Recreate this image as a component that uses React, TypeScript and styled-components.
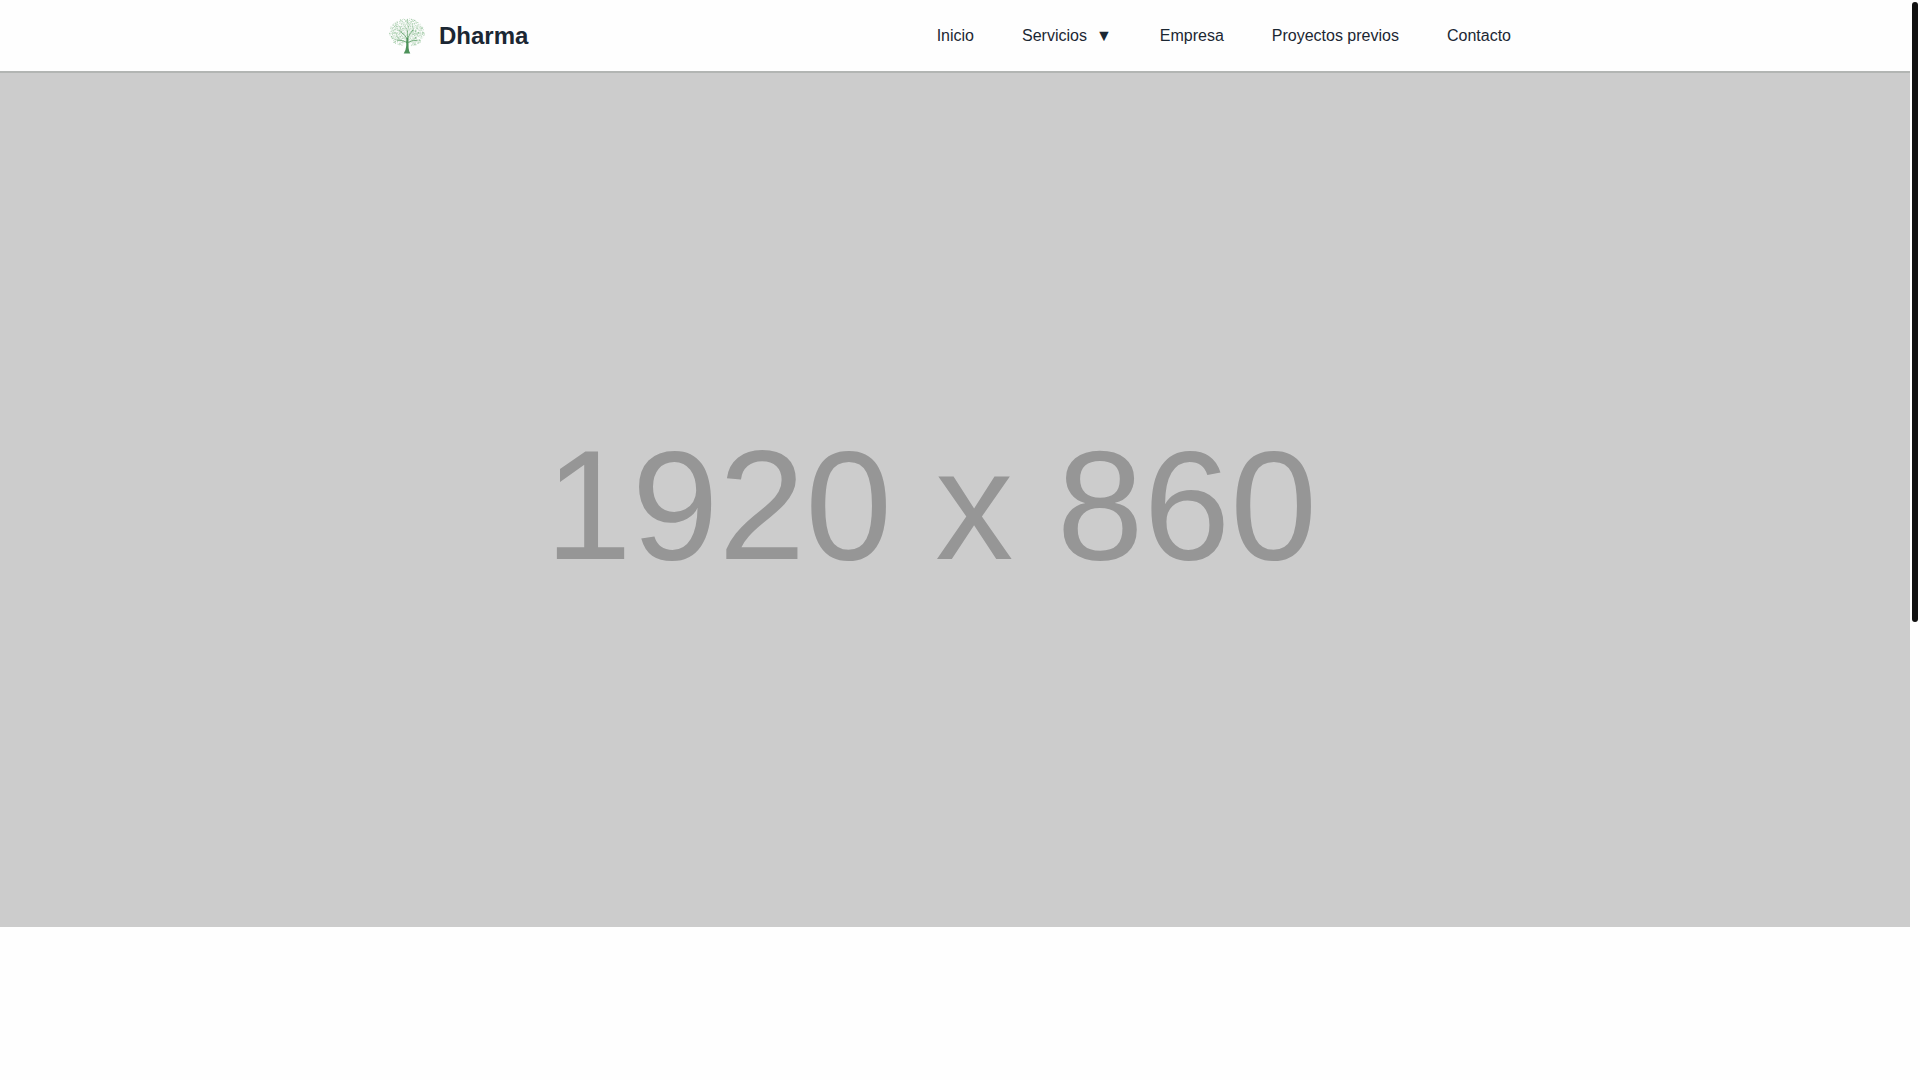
import React from "react";
import styled, { createGlobalStyle } from "styled-components";

const GlobalStyle = createGlobalStyle`
  * { box-sizing: border-box; }
  body {
    margin: 0;
    background: #fefefe;
    color: #1b2733;
    font: 16px/24px "Liberation Sans", Arial, sans-serif;
  }
`;

const Page = styled.div`
  display: flex;
  min-height: 100vh;
`;

const Content = styled.div`
  flex: 1;
  min-width: 0;
`;

const Header = styled.header`
  position: relative;
  z-index: 1;
  background: #fefefe;
  box-shadow: 0 2px 0 #b2b5b3;
`;

const Bar = styled.div`
  display: flex;
  align-items: center;
  justify-content: space-between;
  max-width: 1140px;
  min-height: 71px;
  margin: 0 auto;
  padding: 0 14px 0 4px;
`;

const Brand = styled.a`
  display: flex;
  align-items: center;
  gap: 14px;
  color: inherit;
  font-size: 24px;
  font-weight: 700;
  text-decoration: none;
`;

const Menu = styled.ul`
  display: flex;
  gap: 48px;
  margin: 0;
  padding: 0;
  list-style: none;
`;

const MenuLink = styled.a`
  color: inherit;
  text-decoration: none;
`;

const MenuButton = styled.button`
  display: flex;
  gap: 9px;
  padding: 0;
  border: 0;
  background: none;
  color: inherit;
  font: inherit;
  cursor: pointer;
`;

const Placeholder = styled.section`
  display: flex;
  align-items: center;
  justify-content: center;
  aspect-ratio: 1920 / 860;
  padding: 12px 48px 0 0;
  background: #ccc;
  color: #969696;
  font: 156px/180px "Liberation Sans", Arial, sans-serif;
  white-space: nowrap;
`;

const Track = styled.div`
  position: sticky;
  top: 0;
  flex: 0 0 10px;
  height: 100vh;
  padding: 2px;
`;

const Thumb = styled.div`
  height: 620px;
  border-radius: 3px;
  background: #111;
`;

const noise = (n: number) => {
  const value = Math.sin(n * 12.9898) * 43758.5453;
  return value - Math.floor(value);
};

const leaves = Array.from({ length: 560 }, (_, i) => {
  const angle = i * 2.39996 + noise(i + 1) * 0.2;
  const radius = Math.sqrt((i + 6) / 566) * (1 + Math.sin(angle * 9) * 0.03);
  return {
    x: 18 + Math.cos(angle) * radius * 17.4,
    y: 14.8 + Math.sin(angle) * radius * 14.2,
    size: 0.3 + noise(i + 1500) * 0.35,
    opacity: 0.2 + noise(i + 2300) * 0.5,
  };
}).filter(({ x, y }) => y < 25 || Math.abs(x - 18) > 4);

function Tree() {
  return (
    <svg width="36" height="36" viewBox="0 0 36 36" aria-hidden="true">
      {leaves.map((leaf, i) => (
        <circle key={i} cx={leaf.x} cy={leaf.y} r={leaf.size} fill="#5fa568" opacity={leaf.opacity} />
      ))}
      <g fill="none" stroke="#5d9f66" strokeLinecap="round">
        <path strokeWidth="1" opacity="0.8" d="M18.5 26 18.3 13M18.3 21Q16 16 11 13.5M18.3 24.5Q14 22 8 22M18.8 20Q21 15 24 12M18.8 24.5Q23 22 28 22.5" />
        <path strokeWidth="0.6" opacity="0.5" d="M18.3 14 20 8M12.5 14 11 9M12 22 8 19M24 13V8M23 16 29 15M24 22 28 19M18 13 16 8" />
      </g>
      <path fill="#4d925a" d="M17.4 20h2l.2 10q.2 3 1.7 5.5h-6.6Q17 32 17.2 28z" />
    </svg>
  );
}

export default function App() {
  return (
    <>
      <GlobalStyle />
      <Page>
        <Content>
          <Header>
            <Bar>
              <Brand href="#inicio">
                <Tree />
                Dharma
              </Brand>
              <nav>
                <Menu>
                  <li><MenuLink href="#inicio">Inicio</MenuLink></li>
                  <li>
                    <MenuButton type="button" aria-haspopup="true">
                      <span>Servicios</span>
                      <span>▼</span>
                    </MenuButton>
                  </li>
                  <li><MenuLink href="#empresa">Empresa</MenuLink></li>
                  <li><MenuLink href="#proyectos">Proyectos previos</MenuLink></li>
                  <li><MenuLink href="#contacto">Contacto</MenuLink></li>
                </Menu>
              </nav>
            </Bar>
          </Header>
          <main>
            <Placeholder>1920 x 860</Placeholder>
          </main>
        </Content>
        <Track>
          <Thumb />
        </Track>
      </Page>
    </>
  );
}
